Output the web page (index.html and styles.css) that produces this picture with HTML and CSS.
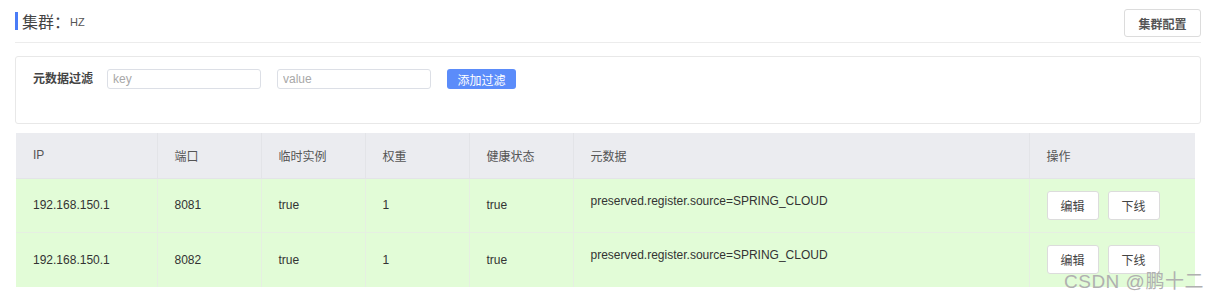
FILE: index.html
```html
<!DOCTYPE html>
<html lang="zh">
<head>
<meta charset="utf-8">
<title>集群</title>
<link rel="stylesheet" href="styles.css">
</head>
<body>
<div class="page">
  <div class="head">
    <div class="title"><span class="bar"></span><span class="t-main">集群：</span><span class="t-sub">HZ</span></div>
    <button class="btn cfg">集群配置</button>
  </div>
  <div class="filter">
    <span class="f-label">元数据过滤</span>
    <input class="inp" placeholder="key">
    <input class="inp" placeholder="value">
    <button class="btn-primary">添加过滤</button>
  </div>
  <table class="grid">
    <colgroup>
      <col class="c1"><col class="c2"><col class="c2"><col class="c2"><col class="c2"><col class="c6"><col class="c7">
    </colgroup>
    <thead>
      <tr><th>IP</th><th>端口</th><th>临时实例</th><th>权重</th><th>健康状态</th><th>元数据</th><th>操作</th></tr>
    </thead>
    <tbody>
      <tr>
        <td>192.168.150.1</td><td>8081</td><td>true</td><td>1</td><td>true</td>
        <td class="meta">preserved.register.source=SPRING_CLOUD</td>
        <td class="ops"><button class="btn op">编辑</button><button class="btn op">下线</button></td>
      </tr>
      <tr>
        <td>192.168.150.1</td><td>8082</td><td>true</td><td>1</td><td>true</td>
        <td class="meta">preserved.register.source=SPRING_CLOUD</td>
        <td class="ops"><button class="btn op">编辑</button><button class="btn op">下线</button></td>
      </tr>
    </tbody>
  </table>
  <div class="watermark">CSDN @鹏十二</div>
</div>
</body>
</html>
```
FILE: styles.css
```css
* { box-sizing: border-box; }
body {
  margin: 0;
  background: #fff;
  font-family: "Liberation Sans", "Noto Sans CJK SC", sans-serif;
  color: #333;
}
.page {
  position: relative;
  width: 1222px;
  height: 302px;
  padding: 9px 22px 0 15px;
}
.head {
  display: flex;
  justify-content: space-between;
  align-items: flex-start;
  height: 34px;
  border-bottom: 1px solid #ececec;
  margin-right: -1px;
}
.title {
  display: flex;
  align-items: center;
  height: 24px;
}
.bar {
  width: 3px;
  height: 18px;
  background: #4a7cf7;
  margin-right: 4px;
}
.t-main {
  font-size: 16px;
  color: #444;
}
.t-sub {
  font-size: 11px;
  color: #555;
  margin-top: 2px;
}
.btn {
  font-family: inherit;
  background: #fff;
  border: 1px solid #dcdcdc;
  border-radius: 3px;
  color: #444;
  cursor: pointer;
}
.cfg {
  width: 77px;
  height: 28px;
  font-size: 12px;
  font-weight: bold;
  color: #555;
  padding: 0;
}
.filter {
  margin-top: 13px;
  height: 68px;
  border: 1px solid #e8e8e8;
  border-radius: 3px;
  display: flex;
  align-items: flex-start;
  padding: 12px 0 0 17px;
  margin-right: -1px;
}
.f-label {
  font-size: 12px;
  font-weight: bold;
  color: #444;
  line-height: 20px;
  margin-right: 14px;
}
.inp {
  width: 154px;
  height: 20px;
  border: 1px solid #dcdfe6;
  border-radius: 3px;
  font-family: inherit;
  font-size: 12px;
  padding: 0 5px;
  margin-right: 16px;
  color: #333;
}
.inp::placeholder { color: #a8a8a8; }
.btn-primary {
  width: 69px;
  height: 20px;
  border: none;
  border-radius: 3px;
  background: #5b8cfa;
  color: #fff;
  font-family: inherit;
  font-size: 12px;
  padding: 0;
}
.grid {
  margin-top: 9px;
  margin-left: 1px;
  width: 1179px;
  border-collapse: collapse;
  table-layout: fixed;
  font-size: 12px;
}
.c1 { width: 141px; }
.c2 { width: 104px; }
.c6 { width: 456px; }
.c7 { width: 166px; }
.grid th {
  background: #ebecf0;
  height: 45px;
  text-align: left;
  font-weight: normal;
  color: #555;
  padding: 0 0 0 17px;
  border: 1px solid #e3e4e8;
  border-top: none;
}
.grid td {
  background: #e2fcd7;
  height: 54px;
  padding: 0 0 0 17px;
  border: 1px solid #e6efe2;
  color: #333;
}
.grid tr:last-child td { height: 55px; }
.grid th:first-child, .grid td:first-child { border-left: none; }
.grid th:last-child, .grid td:last-child { border-right: none; }
.grid tbody tr:last-child td { border-bottom: none; }
.grid td.meta {
  vertical-align: top;
  padding-top: 15px;
}
.ops {
  white-space: nowrap;
}
.op {
  width: 52px;
  height: 29px;
  font-size: 12px;
  padding: 0;
  margin-right: 9px;
}
.watermark {
  position: absolute;
  left: 1064px;
  top: 271px;
  font-size: 19px;
  line-height: 22px;
  letter-spacing: 0.5px;
  color: #b0b0b0;
  font-family: "Liberation Sans", "Noto Sans CJK SC", sans-serif;
}
```
